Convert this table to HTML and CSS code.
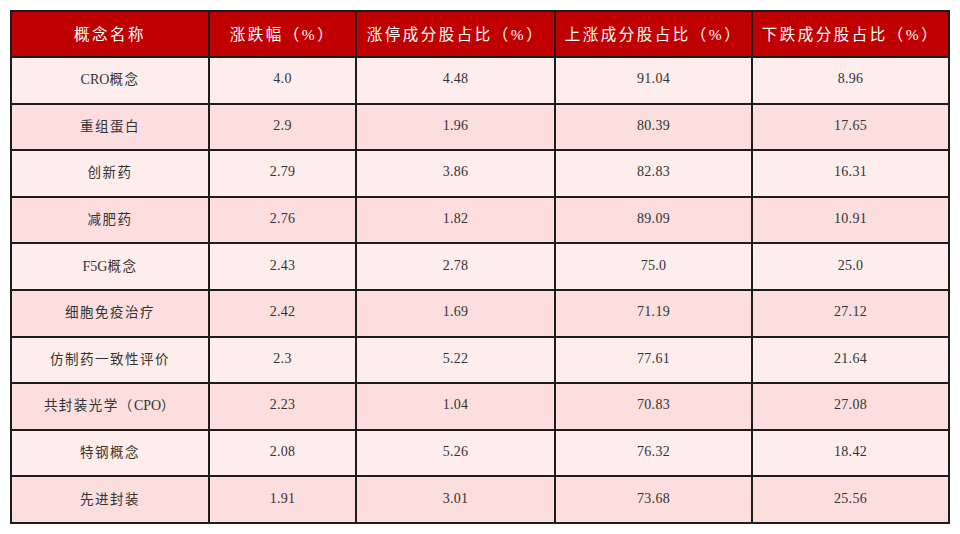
FILE: index.html
```html
<!DOCTYPE html>
<html lang="zh">
<head>
<meta charset="utf-8">
<link rel="stylesheet" href="styles.css">
</head>
<body>
<table class="tbl">
  <colgroup>
    <col class="c1"><col class="c2"><col class="c3"><col class="c4"><col class="c5">
  </colgroup>
  <thead>
    <tr class="head">
      <th>概念名称</th><th>涨跌幅（%）</th><th>涨停成分股占比（%）</th><th>上涨成分股占比（%）</th><th>下跌成分股占比（%）</th>
    </tr>
  </thead>
  <tbody>
    <tr class="odd"><td><span class="lat">CRO</span>概念</td><td>4.0</td><td>4.48</td><td>91.04</td><td>8.96</td></tr>
    <tr class="even"><td>重组蛋白</td><td>2.9</td><td>1.96</td><td>80.39</td><td>17.65</td></tr>
    <tr class="odd"><td>创新药</td><td>2.79</td><td>3.86</td><td>82.83</td><td>16.31</td></tr>
    <tr class="even"><td>减肥药</td><td>2.76</td><td>1.82</td><td>89.09</td><td>10.91</td></tr>
    <tr class="odd"><td><span class="lat">F5G</span>概念</td><td>2.43</td><td>2.78</td><td>75.0</td><td>25.0</td></tr>
    <tr class="even"><td>细胞免疫治疗</td><td>2.42</td><td>1.69</td><td>71.19</td><td>27.12</td></tr>
    <tr class="odd"><td>仿制药一致性评价</td><td>2.3</td><td>5.22</td><td>77.61</td><td>21.64</td></tr>
    <tr class="even"><td>共封装光学（<span class="lat">CPO</span>）</td><td>2.23</td><td>1.04</td><td>70.83</td><td>27.08</td></tr>
    <tr class="odd"><td>特钢概念</td><td>2.08</td><td>5.26</td><td>76.32</td><td>18.42</td></tr>
    <tr class="even"><td>先进封装</td><td>1.91</td><td>3.01</td><td>73.68</td><td>25.56</td></tr>
  </tbody>
</table>
</body>
</html>
```

FILE: styles.css
```css
html, body {
  margin: 0;
  padding: 0;
  background: #ffffff;
}
body {
  padding: 10px 0 0 10px;
}
.tbl {
  border-collapse: collapse;
  table-layout: fixed;
  width: 938px;
  font-family: "Liberation Serif", "Noto Sans CJK SC", serif;
}
.c1 { width: 198px; }
.c2 { width: 147px; }
.c3 { width: 199px; }
.c4 { width: 197px; }
.c5 { width: 197px; }
.tbl th, .tbl td {
  border: 2px solid #1c1c1c;
  text-align: center;
  vertical-align: middle;
  padding: 0 0 2px 0;
}
.head {
  height: 46px;
}
.head th {
  background: #c00000;
  color: #ffffff;
  font-weight: normal;
  font-size: 15.5px;
  letter-spacing: 2.5px;
}
.tbl tbody tr {
  height: 46.6px;
}
.tbl td {
  color: #333333;
  font-size: 14px;
  letter-spacing: 0.3px;
}
.tbl td:first-child {
  letter-spacing: 1.5px;
  font-size: 13.5px;
  padding-bottom: 4px;
}
.tbl td .lat {
  letter-spacing: 0;
  font-size: 14px;
}
.odd td { background: #fdeded; }
.even td { background: #fcdedf; }
```
